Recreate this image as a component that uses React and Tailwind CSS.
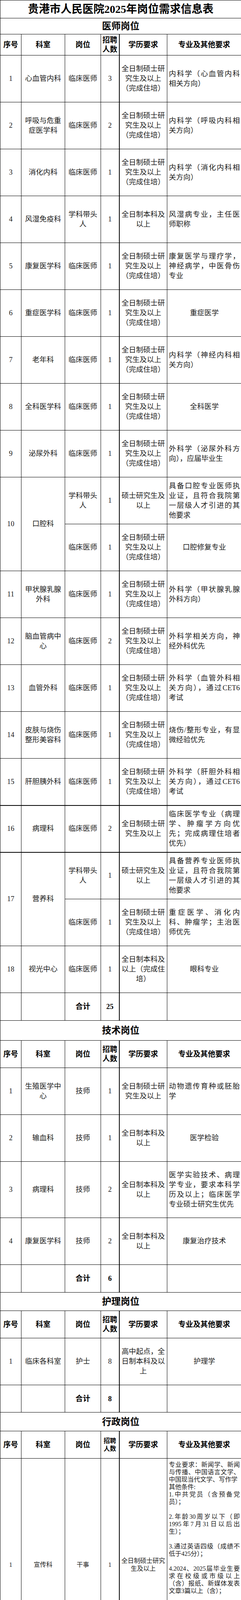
const EDU = '全日制硕士研究生及以上（完成住培）'
const EDU_M = '全日制硕士研究生及以上'
const EDU_B = '全日制本科及以上'
const LEAD_EDU = '硕士研究生及以上'

const doctors = [
  { no: 1, dept: '心血管内科', items: [{ pos: '临床医师', n: 3, edu: EDU, req: '内科学（心血管内科相关方向）' }] },
  { no: 2, dept: '呼吸与危重症医学科', items: [{ pos: '临床医师', n: 2, edu: EDU, req: '内科学（呼吸内科相关方向）' }] },
  { no: 3, dept: '消化内科', items: [{ pos: '临床医师', n: 1, edu: EDU, req: '内科学（消化内科相关方向）' }] },
  { no: 4, dept: '风湿免疫科', items: [{ pos: '学科带头人', n: 1, edu: EDU_B, req: '风湿病专业，主任医师职称' }] },
  { no: 5, dept: '康复医学科', items: [{ pos: '临床医师', n: 1, edu: EDU, req: '康复医学与理疗学，神经病学，中医骨伤专业' }] },
  { no: 6, dept: '重症医学科', items: [{ pos: '临床医师', n: 1, edu: EDU, req: '重症医学', center: true }] },
  { no: 7, dept: '老年科', items: [{ pos: '临床医师', n: 1, edu: EDU, req: '内科学（神经内科相关方向）' }] },
  { no: 8, dept: '全科医学科', items: [{ pos: '临床医师', n: 1, edu: EDU, req: '全科医学', center: true }] },
  { no: 9, dept: '泌尿外科', items: [{ pos: '临床医师', n: 1, edu: EDU, req: '外科学（泌尿外科方向），应届毕业生' }] },
  {
    no: 10,
    dept: '口腔科',
    items: [
      { pos: '学科带头人', n: 1, edu: LEAD_EDU, req: '具备口腔专业医师执业证，且符合我院第一层级人才引进的其他要求' },
      { pos: '临床医师', n: 1, edu: EDU, req: '口腔修复专业', center: true }
    ]
  },
  { no: 11, dept: '甲状腺乳腺外科', items: [{ pos: '临床医师', n: 1, edu: EDU, req: '外科学（甲状腺乳腺外科方向）' }] },
  { no: 12, dept: '脑血管病中心', items: [{ pos: '临床医师', n: 2, edu: EDU, req: '外科学相关方向，神经外科优先' }] },
  { no: 13, dept: '血管外科', items: [{ pos: '临床医师', n: 1, edu: EDU, req: '外科学（血管外科相关方向），通过CET6考试' }] },
  { no: 14, dept: '皮肤与烧伤整形美容科', items: [{ pos: '临床医师', n: 1, edu: EDU, req: '烧伤/整形专业，有显微经验优先' }] },
  { no: 15, dept: '肝胆胰外科', items: [{ pos: '临床医师', n: 1, edu: EDU, req: '外科学（肝胆外科相关方向），通过CET6考试' }] },
  { no: 16, dept: '病理科', thick: true, items: [{ pos: '临床医师', n: 2, edu: EDU_M, req: '临床医学专业（病理学、肿瘤学方向优先；完成病理住培者优先）' }] },
  {
    no: 17,
    dept: '营养科',
    thick: true,
    items: [
      { pos: '学科带头人', n: 1, edu: LEAD_EDU, req: '具备营养专业医师执业证，且符合我院第一层级人才引进的其他要求' },
      { pos: '临床医师', n: 1, edu: EDU, req: '重症医学、消化内科、肿瘤学；主治医师优先' }
    ]
  },
  { no: 18, dept: '视光中心', items: [{ pos: '临床医师', n: 1, edu: '全日制本科及以上（完成住培）', req: '眼科专业', center: true }] }
]

const techs = [
  { no: 1, dept: '生殖医学中心', items: [{ pos: '技师', n: 1, edu: EDU_M, req: '动物遗传育种或胚胎学' }] },
  { no: 2, dept: '输血科', items: [{ pos: '技师', n: 1, edu: EDU_B, req: '医学检验', center: true }] },
  { no: 3, dept: '病理科', h: 'h-[144px]', items: [{ pos: '技师', n: 2, edu: EDU_B, req: '医学实验技术、病理学专业，要求本科学历及以上；临床医学专业硕士研究生优先' }] },
  { no: 4, dept: '康复医学科', items: [{ pos: '技师', n: 2, edu: EDU_B, req: '康复治疗技术', center: true }] }
]

const nurses = [
  { no: 1, dept: '临床各科室', items: [{ pos: '护士', n: 8, edu: '高中起点，全日制本科及以上', req: '护理学', center: true }] }
]

// 宣传科 的专业及其他要求，null 为空行
const adminReq = [
  '专业要求：新闻学、新闻与传播、中国语言文学、中国现当代文学、写作学',
  '其他条件:',
  '1.中共党员（含预备党员）；',
  null,
  '2.年龄30周岁以下（即1995年7月31日以后出生）；',
  null,
  '3.通过英语四级（成绩不低于425分）；',
  null,
  '4.2024、2025届毕业生要求在校级或市级以上（含）报纸、新媒体发表文章3篇以上（含）；',
  null,
  '5.非2024、2025届毕业生要求在报社或电视台从事记者、编辑工作3年以上（含）；',
  null,
  '6.擅长新闻写作、摄影摄像、图像处理、视频剪辑、新媒体应用，沟通表达能力强。'
]

const cell = 'border border-black align-middle text-center px-1'
const countCell = 'border border-black border-r-2 align-middle text-center px-0'

function SectionTitle({ title, h }) {
  return (
    <tr className={h}>
      <td colSpan={6} className="border border-black text-center align-middle text-[24px] leading-[30px] font-bold text-black">
        {title}
      </td>
    </tr>
  )
}

function HeaderRow({ h, small }) {
  return (
    <tr className={`${h} font-bold text-[19px] leading-[24px] text-black`}>
      <td className={`${cell} px-0`}>序号</td>
      <td className={cell}>科室</td>
      <td className={cell}>岗位</td>
      <td className={`${countCell} ${small ? 'text-[16px] leading-[20px]' : ''}`}>招聘人数</td>
      <td className={cell}>学历要求</td>
      <td className={cell}>专业及其他要求</td>
    </tr>
  )
}

function Rows({ list }) {
  return list.flatMap((d) =>
    d.items.map((it, i) => {
      const top = d.thick && i === 0 ? 'border-t-2' : ''
      return (
        <tr key={`${d.no}-${i}`} className={d.h || 'h-[120px]'}>
          {i === 0 && (
            <>
              <td rowSpan={d.items.length} className={`${cell} ${top}`}>
                {d.no}
              </td>
              <td rowSpan={d.items.length} className={`${cell} ${top}`}>
                {d.dept}
              </td>
            </>
          )}
          <td className={`${cell} ${top}`}>{it.pos}</td>
          <td className={`${countCell} ${top}`}>{it.n}</td>
          <td className={`${cell} ${top}`}>{it.edu}</td>
          <td className={`border border-black align-middle pl-1 pr-[3px] ${it.center ? 'text-center' : 'text-justify'} ${top}`}>
            {it.req}
          </td>
        </tr>
      )
    })
  )
}

function TotalRow({ n, h, small }) {
  return (
    <tr className={`${h} text-black`}>
      <td className={cell}></td>
      <td className={cell}></td>
      <td className={`${cell} font-bold leading-[20px] ${small ? 'text-[17px]' : 'text-[19px]'}`}>合计</td>
      <td className={`${countCell} font-bold leading-[20px]`}>{n}</td>
      <td className={cell}></td>
      <td className={cell}></td>
    </tr>
  )
}

export default function App() {
  return (
    <div className="w-[618px] bg-white text-[#1a1a1a] font-['Liberation_Serif','Noto_Sans_CJK_SC',serif]">
      <table className="w-[618px] table-fixed border-collapse text-[18.5px] leading-[25px]">
        <colgroup>
          <col className="w-[54px]" />
          <col className="w-[112px]" />
          <col className="w-[92px]" />
          <col className="w-[47px]" />
          <col className="w-[123px]" />
          <col className="w-[190px]" />
        </colgroup>
        <tbody>
          <tr className="h-[46px]">
            <td colSpan={6} className="border border-black text-center align-middle text-[28px] leading-[34px] font-bold text-black">
              贵港市人民医院2025年岗位需求信息表
            </td>
          </tr>

          <SectionTitle title="医师岗位" h="h-[41px]" />
          <HeaderRow h="h-[54px]" />
          <Rows list={doctors} />
          <TotalRow n={25} h="h-[71px]" />

          <SectionTitle title="技术岗位" h="h-[51px]" />
          <HeaderRow h="h-[70px]" />
          <Rows list={techs} />
          <TotalRow n={6} h="h-[71px]" />

          <SectionTitle title="护理岗位" h="h-[47px]" />
          <HeaderRow h="h-[70px]" />
          <Rows list={nurses} />
          <TotalRow n={8} h="h-[70px]" />

          <SectionTitle title="行政岗位" h="h-[48px]" />
          <HeaderRow h="h-[70px]" small />
          <tr className="h-[545px] text-[16px] leading-[20px]">
            <td className={cell}>1</td>
            <td className={cell}>宣传科</td>
            <td className={cell}>干事</td>
            <td className={countCell}>1</td>
            <td className={cell}>{EDU_M}</td>
            <td className="border border-black align-middle pl-1 pr-[3px] text-justify text-[16px] leading-[19px]">
              {adminReq.map((p, i) => (p ? <p key={i}>{p}</p> : <div key={i} className="h-[19px]"></div>))}
            </td>
          </tr>
          <TotalRow n={1} h="h-[28px]" small />
        </tbody>
      </table>
    </div>
  )
}
